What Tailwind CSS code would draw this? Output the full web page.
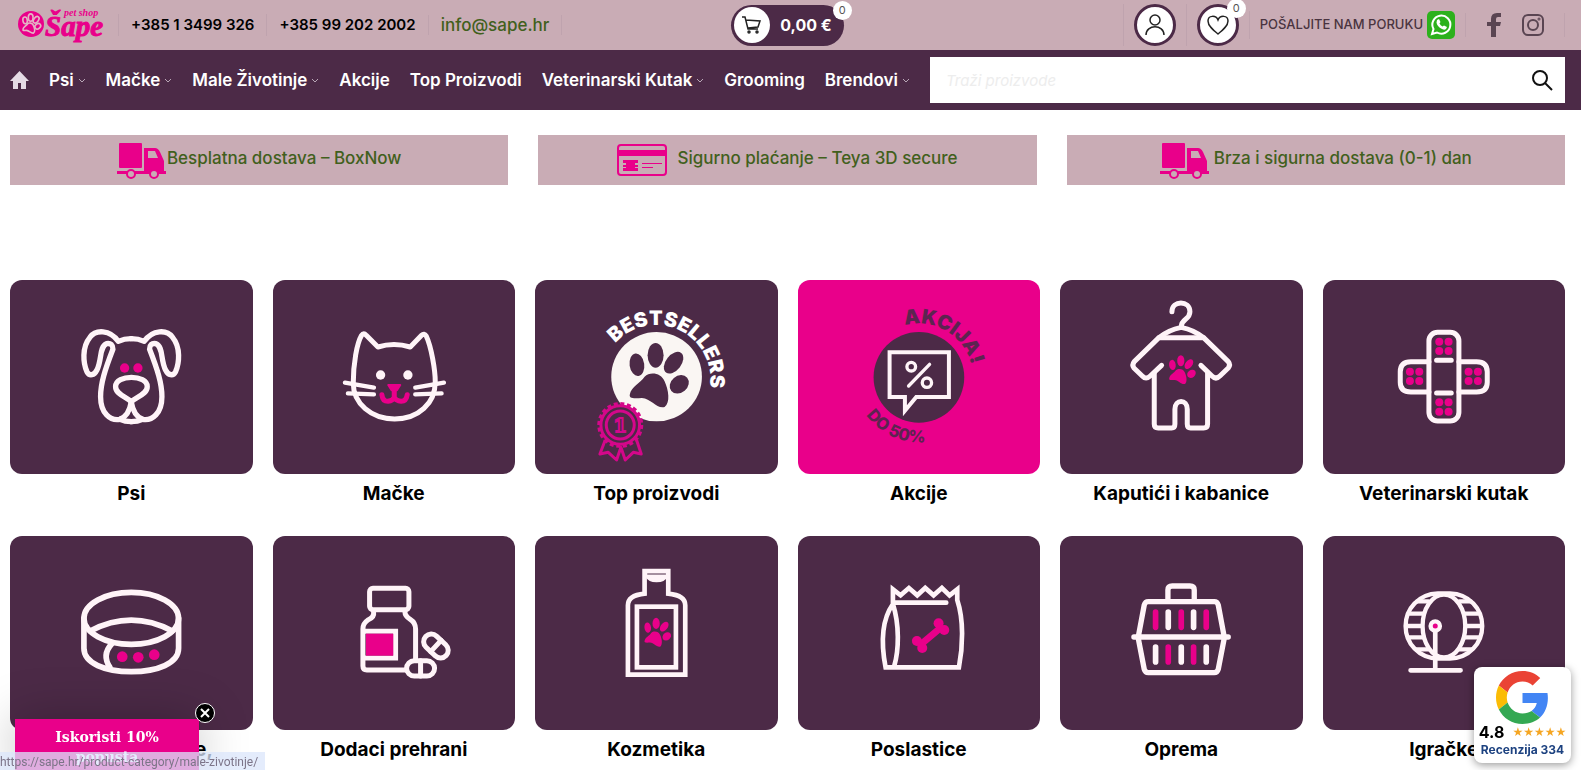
<!DOCTYPE html>
<html lang="hr">
<head>
  <meta charset="UTF-8" />
  <meta name="viewport" content="width=device-width, initial-scale=1" />
  <title>Pet shop Šape</title>
  <script src="https://cdn.jsdelivr.net/npm/@tailwindcss/browser@4"></script>
</head>
<body class="bg-white font-['Inter',sans-serif] text-black">

  <!-- shared shapes -->
  <svg class="absolute w-0 h-0" aria-hidden="true">
    <defs>
      <g id="paw">
        <ellipse cx="-59" cy="-36" rx="22" ry="34" transform="rotate(-8 -59 -36)" />
        <ellipse cx="-3" cy="-64" rx="24" ry="37" />
        <ellipse cx="51" cy="-42" rx="23" ry="37" transform="rotate(38 51 -42)" />
        <ellipse cx="68" cy="23" rx="31" ry="25" transform="rotate(-40 68 23)" />
        <path d="M-80 52C-76 30-48 18-36 0C-20-16 14-12 24 14C36 40 42 78 24 91C0 97-16 66-44 64C-70 66-84 66-80 52Z" />
      </g>
      <g id="truck">
        <rect x="2" y="1" width="23" height="25" rx="1" />
        <path fill-rule="evenodd" d="M27 6h11q3 0 5 4l4 9v11H27zM31 9v7h10l-3-7z" />
        <path d="M0 29h49v3H0z" />
        <circle cx="14" cy="32" r="4" fill="#c9acb5" stroke="#e9008a" stroke-width="2" />
        <circle cx="37" cy="32" r="4" fill="#c9acb5" stroke="#e9008a" stroke-width="2" />
      </g>
      <path id="chevron" d="M1 1l3 3 3-3" fill="none" stroke="#b9a8b7" stroke-width="1" />
    </defs>
  </svg>

  <header>
    <!-- top bar -->
    <div class="bg-[#c9acb5] h-[50px] pl-2.5 pr-4 flex items-center">
      <div class="flex-1 flex items-center font-semibold text-[15px]">
        <a href="#" aria-label="Pet shop Šape" class="pl-2 pr-3">
          <svg class="w-[88px] h-10" viewBox="0 0 88 40" fill="#e9008a">
            <circle cx="13" cy="19" r="13" />
            <g fill="none" stroke="#e3b5c5" stroke-width="16" transform="translate(13 19) scale(.1)"><use href="#paw" /></g>
            <text x="27" y="31" font-family="Liberation Serif, serif" font-style="italic" font-weight="700" font-size="29" stroke="#e9008a" stroke-width="1">Šape</text>
            <text x="46" y="11" font-family="Liberation Serif, serif" font-style="italic" font-weight="700" font-size="10">pet shop</text>
          </svg>
        </a>
        <a href="tel:+38513499326" class="border-l border-[#bfa3ae] px-3">+385 1 3499 326</a>
        <a href="tel:+385992022002" class="border-l border-[#bfa3ae] px-3">+385 99 202 2002</a>
        <a href="mailto:info@sape.hr" class="border-x border-[#bfa3ae] px-3 text-[17px] leading-5 font-medium text-[#41601c]">info@sape.hr</a>
      </div>

      <a href="#" class="relative h-[41px] pl-[3px] pr-3 rounded-full bg-[#4c2a47] text-white font-bold text-base flex items-center gap-2.5">
        <span class="size-9 rounded-full bg-white flex items-center justify-center">
          <svg class="size-5" viewBox="0 0 20 20" fill="none" stroke="#222" stroke-width="1.5">
            <path d="M0 2h3l3 12h10M4 5l14 1-2 6-10 1" />
            <circle cx="7" cy="17" r="1" /><circle cx="15" cy="17" r="1" />
          </svg>
        </span>
        0,00 €
        <span class="absolute -right-2 -top-1 size-[19px] rounded-full bg-white text-[#555] text-[11px] font-normal flex items-center justify-center">0</span>
      </a>

      <div class="flex-1 flex items-center justify-end">
        <div class="border-l border-[#bfa3ae] px-2.5">
          <button type="button" aria-label="Moj račun" class="size-[42px] rounded-full border-3 border-[#4c2a47] bg-white flex items-center justify-center">
            <svg class="size-6" viewBox="0 0 24 24" fill="none" stroke="#222" stroke-width="1.5">
              <circle cx="12" cy="7" r="5" /><path d="M3 22c0-11 18-11 18 0" />
            </svg>
          </button>
        </div>
        <div class="border-l border-[#bfa3ae] px-2.5">
          <button type="button" aria-label="Lista želja" class="relative size-[42px] rounded-full border-3 border-[#4c2a47] bg-white flex items-center justify-center">
            <svg class="size-6" viewBox="0 0 24 24" fill="none" stroke="#222" stroke-width="1.5">
              <path d="M12 21C7 17 2 13 2 8c0-6 8-6 10-1 2-5 10-5 10 1 0 5-5 9-10 13z" />
            </svg>
            <span class="absolute -right-2.5 -top-2 size-[19px] rounded-full bg-white text-[#555] text-[11px] flex items-center justify-center">0</span>
          </button>
        </div>
        <a href="#" class="border-l border-[#bfa3ae] px-2.5 flex items-center gap-1 text-[13px] font-medium text-[#4a3440]">
          POŠALJITE NAM PORUKU
          <svg class="size-7" viewBox="0 0 28 28">
            <rect width="28" height="28" rx="5" fill="#2cb11c" />
            <path d="M5 23l1.500-5A9 9 0 1 1 10 21.500z" fill="none" stroke="#fff" stroke-width="2" />
            <path d="M10 9l2-1 1.500 3-1 1.500q1 2 3 3l1.500-1 3 1.500-1 2q-2 1.500-5-.5-4-2.500-4.500-6z" fill="#fff" />
          </svg>
        </a>
        <div class="border-x border-[#bfa3ae] px-5 flex items-center gap-5">
          <a href="#" aria-label="Facebook">
            <svg class="w-4 h-6" viewBox="0 0 16 24" fill="#5a4552"><path d="M5 24V13H1V9h4V6q0-6 6-6h4v4h-3q-2 0-2 2v3h5l-1 4h-4v11z" /></svg>
          </a>
          <a href="#" aria-label="Instagram">
            <svg class="size-[22px]" viewBox="0 0 22 22" fill="none" stroke="#5a4552" stroke-width="2">
              <rect x="1" y="1" width="20" height="20" rx="5" /><circle cx="11" cy="11" r="5" /><circle cx="17" cy="5" r=".5" />
            </svg>
          </a>
        </div>
      </div>
    </div>

    <!-- main menu -->
    <div class="bg-[#4c2a47] h-[60px] pl-2.5 pr-4 flex items-center gap-5">
      <nav class="flex-1 flex items-center justify-between text-white font-semibold text-[17px] leading-6 whitespace-nowrap">
        <a href="#" aria-label="Početna">
          <svg class="size-[19px]" viewBox="0 0 19 19" fill="#e5dbe5"><path d="M9.500 0L19 10h-3v8h-5v-6H8v6H3v-8H0z" /></svg>
        </a>
        <a href="#" class="flex items-center gap-1">Psi<svg class="w-2 h-[5px]"><use href="#chevron" /></svg></a>
        <a href="#" class="flex items-center gap-1">Mačke<svg class="w-2 h-[5px]"><use href="#chevron" /></svg></a>
        <a href="#" class="flex items-center gap-1">Male Životinje<svg class="w-2 h-[5px]"><use href="#chevron" /></svg></a>
        <a href="#">Akcije</a>
        <a href="#">Top Proizvodi</a>
        <a href="#" class="flex items-center gap-1">Veterinarski Kutak<svg class="w-2 h-[5px]"><use href="#chevron" /></svg></a>
        <a href="#">Grooming</a>
        <a href="#" class="flex items-center gap-1">Brendovi<svg class="w-2 h-[5px]"><use href="#chevron" /></svg></a>
      </nav>
      <form class="w-[635px] h-[46px] bg-white flex items-center pl-4 pr-3">
        <input type="search" aria-label="Traži proizvode" placeholder="Traži proizvode" class="flex-1 h-full text-[15px] italic outline-none placeholder:text-[#ededed]" />
        <button type="button" aria-label="Traži">
          <svg class="size-[22px]" viewBox="0 0 22 22" fill="none" stroke="#111" stroke-width="2"><circle cx="9" cy="9" r="7" /><path d="M14 14l7 7" /></svg>
        </button>
      </form>
    </div>
  </header>

  <main class="pl-2.5 pr-4 pt-[25px]">
    <!-- benefits -->
    <section class="grid grid-cols-3 gap-[30px] font-medium text-[17px] leading-6 text-[#41601c]">
      <div class="bg-[#c9acb5] h-[50px] flex items-center justify-center">
        <svg class="w-[50px] h-[37px]" viewBox="0 0 50 37" fill="#e9008a"><use href="#truck" /></svg>
        <span class="pb-1">Besplatna dostava – BoxNow</span>
      </div>
      <div class="bg-[#c9acb5] h-[50px] flex items-center justify-center gap-2.5">
        <svg class="w-[50px] h-8" viewBox="0 0 50 32" fill="#e9008a">
          <rect x="1" y="1" width="48" height="30" rx="3" fill="none" stroke="#e9008a" stroke-width="2" />
          <path d="M1 6h48v6H1zM6 16h15v3H6zM9 19h9v2H9zM6 21h15v2H6zM9 23h9v1H9zM6 24h15v3H6zM25 19h20v1H25zM25 23h11v1H25z" />
        </svg>
        <span class="pb-1">Sigurno plaćanje – Teya 3D secure</span>
      </div>
      <div class="bg-[#c9acb5] h-[50px] flex items-center justify-center gap-1">
        <svg class="w-[50px] h-[37px]" viewBox="0 0 50 37" fill="#e9008a"><use href="#truck" /></svg>
        <span class="pb-1">Brza i sigurna dostava (0-1) dan</span>
      </div>
    </section>

    <!-- categories -->
    <section class="mt-[95px] grid grid-cols-6 gap-x-5 gap-y-7 text-center text-[19px] leading-7 font-bold">
      <a href="#">
        <svg class="w-full aspect-5/4 rounded-xl bg-[#4c2a47]" viewBox="30 30 718 582" fill="none" stroke="#fff4f8" stroke-width="16" stroke-linecap="round" stroke-linejoin="round">
          <g id="dog-half">
            <path d="M389 206Q368 206 350 214C325 178 282 178 265 202C240 232 245 280 256 305C264 320 278 316 286 300C302 268 292 232 315 221Q334 218 334 238C310 300 297 340 297 380C297 430 326 453 355 448C376 440 385 420 389 396" />
            <path d="M355 448Q370 455 389 455" />
          </g>
          <use href="#dog-half" transform="matrix(-1 0 0 1 778 0)" />
          <path d="M342 350C342 313 437 313 437 350C437 372 405 380 389 395C373 380 342 372 342 350Z" />
          <g fill="#e9008a" stroke="none"><circle cx="369" cy="294" r="14" /><circle cx="409" cy="294" r="14" /></g>
        </svg>
        <div class="mt-1.5">Psi</div>
      </a>
      <a href="#">
        <svg class="w-full aspect-5/4 rounded-xl bg-[#4c2a47]" viewBox="808 30 718 582" fill="none" stroke="#fff4f8" stroke-width="15" stroke-linecap="round" stroke-linejoin="round">
          <path d="M1044 340C1044 280 1055 220 1069 196Q1075 187 1083 196L1118 231Q1166 216 1215 231L1249 196Q1257 188 1263 198C1278 230 1290 300 1290 335C1290 400 1240 447 1168 447C1098 447 1044 400 1044 340Z" />
          <path stroke-width="13" d="M1019 338L1106 353M1028 370L1106 373M1316 338L1230 353M1309 370L1230 373" />
          <g fill="#fff4f8" stroke="none"><circle cx="1126" cy="315" r="14" /><circle cx="1208" cy="315" r="14" /></g>
          <g stroke="#e9008a" fill="#e9008a" stroke-width="6"><path d="M1149 345h36l-10 16h-16z" /><path fill="none" stroke-width="15" d="M1167 360V384M1130 374Q1132 394 1148 394Q1163 392 1167 382Q1172 392 1188 394Q1203 394 1206 374" /></g>
        </svg>
        <div class="mt-1.5">Mačke</div>
      </a>
      <a href="#">
        <svg class="w-full aspect-5/4 rounded-xl bg-[#4c2a47]" viewBox="44 30 718 582">
          <ellipse cx="404" cy="320" rx="136" ry="134" fill="#faf6f3" />
          <g fill="#4c2a47" transform="translate(404 320)"><use href="#paw" /></g>
          <path id="best-arc" d="M280 220A163 163 0 0 1 543 410" fill="none" />
          <text font-family="Inter, sans-serif" font-weight="900" font-size="60" fill="#fff"><textPath href="#best-arc">BESTSELLERS</textPath></text>
          <g fill="#4c2a47" stroke="#d4078a" stroke-width="9" stroke-linejoin="round">
            <path d="M250 510L234 552L259 547L284 570L297 532L310 570L334 547L358 552L344 510" />
            <circle cx="295" cy="465" r="58" />
            <circle cx="295" cy="465" r="64" fill="none" stroke-width="10" stroke-dasharray="12 8" />
            <circle cx="295" cy="465" r="42" />
          </g>
          <text x="295" y="486" text-anchor="middle" font-family="DejaVu Serif, serif" font-weight="700" font-size="58" fill="#4c2a47" stroke="#d4078a" stroke-width="6">1</text>
        </svg>
        <div class="mt-1.5">Top proizvodi</div>
      </a>
      <a href="#">
        <svg class="w-full aspect-5/4 rounded-xl bg-[#e9008a]" viewBox="822 30 718 582" fill="none" stroke="#fff4f8" stroke-width="12">
          <circle cx="1180" cy="322" r="136" fill="#4c2a47" stroke="none" />
          <path d="M1092 247H1270V381H1172L1138 422V381H1092Z" />
          <g stroke-width="10" stroke-linecap="round"><circle cx="1157" cy="290" r="13" /><circle cx="1204" cy="338" r="14" /><path d="M1212 283L1149 348" /></g>
          <path id="sale-arc" d="M1138 166A162 162 0 0 1 1340 346" stroke="none" />
          <path id="off-arc" d="M1022 435A195 195 0 0 0 1256 502" stroke="none" />
          <g font-family="Inter, sans-serif" font-weight="900" fill="#5c2450" stroke="none">
            <text font-size="60"><textPath href="#sale-arc">AKCIJA!</textPath></text>
            <text font-size="50" font-weight="800"><textPath href="#off-arc">DO 50%</textPath></text>
          </g>
        </svg>
        <div class="mt-1.5">Akcije</div>
      </a>
      <a href="#">
        <svg class="w-full aspect-5/4 rounded-xl bg-[#4c2a47]" viewBox="30 30 718 582" fill="none" stroke="#fff4f8" stroke-width="15" stroke-linecap="round" stroke-linejoin="round">
          <path d="M361 125C361 90 415 90 415 125C415 150 389 145 389 170M322 203Q350 180 389 172Q428 180 456 203" />
          <path d="M330 286L296 318Q283 330 272 318L247 294Q240 285 248 275L322 203H456L530 275Q538 285 530 294L505 318Q493 330 481 318L448 286" />
          <path d="M308 310V462Q308 474 320 474H360Q370 474 370 462V418C370 387 407 387 407 418V462Q407 474 417 474H456Q468 474 468 462V310" />
          <g fill="#e9008a" stroke="none" transform="translate(389 301) scale(.45)"><use href="#paw" /></g>
        </svg>
        <div class="mt-1.5">Kaputići i kabanice</div>
      </a>
      <a href="#">
        <svg class="w-full aspect-5/4 rounded-xl bg-[#4c2a47]" viewBox="806 30 718 582" fill="none" stroke="#fff4f8" stroke-width="15" stroke-linecap="round">
          <rect x="1119" y="187" width="90" height="266" rx="26" />
          <path d="M1119 275H1065Q1033 275 1033 305V337Q1033 366 1065 366H1119M1209 275H1262Q1294 275 1294 305V337Q1294 366 1262 366H1209" />
          <path d="M1142 271H1186M1142 369H1186" />
          <g id="dots" fill="#e9008a" stroke="none"><circle cx="1150" cy="215" r="12" /><circle cx="1178" cy="215" r="12" /><circle cx="1150" cy="243" r="12" /><circle cx="1178" cy="243" r="12" /></g>
          <use href="#dots" y="182" /><use href="#dots" x="-88" y="90" /><use href="#dots" x="88" y="90" />
        </svg>
        <div class="mt-1.5">Veterinarski kutak</div>
      </a>

      <a href="#">
        <svg class="w-full aspect-5/4 rounded-xl bg-[#4c2a47]" viewBox="30 18 718 582" fill="none" stroke="#fff4f8" stroke-width="17" stroke-linecap="round">
          <ellipse cx="389" cy="265" rx="142" ry="78" />
          <path d="M247 265V355C247 400 310 425 389 425C468 425 531 400 531 355V265M266 303Q389 238 512 303M330 342Q300 375 325 412" />
          <g fill="#e9008a" stroke="none"><circle cx="362" cy="380" r="16" /><circle cx="410" cy="382" r="16" /><circle cx="458" cy="374" r="16" /></g>
        </svg>
        <div class="mt-1.5">Za male životinje,</div>
      </a>
      <a href="#">
        <svg class="w-full aspect-5/4 rounded-xl bg-[#4c2a47]" viewBox="808 18 718 582" fill="none" stroke="#fff4f8" stroke-width="15" stroke-linecap="round">
          <rect x="1093" y="175" width="118" height="64" rx="10" />
          <path d="M1105 245Q1108 262 1088 270Q1073 280 1073 297V408Q1073 420 1085 420H1200M1199 245Q1199 258 1215 268Q1231 278 1231 297V388M1080 304H1171V384H1080" />
          <rect x="1082" y="311" width="82" height="66" fill="#e9008a" stroke="none" />
          <g id="pill"><rect x="1204" y="392" width="84" height="46" rx="23" /><path d="M1246 392V438" /></g>
          <use href="#pill" transform="translate(1292 348) rotate(43) translate(-1246 -415)" />
        </svg>
        <div class="mt-1.5">Dodaci prehrani</div>
      </a>
      <a href="#">
        <svg class="w-full aspect-5/4 rounded-xl bg-[#4c2a47]" viewBox="44 18 718 582" fill="none" stroke="#fff4f8" stroke-width="14">
          <path d="M368 123H439V191Q490 196 490 226V434H318V226Q318 196 368 191Z" />
          <rect x="345" y="230" width="117" height="182" />
          <path d="M370 125H438V137Q430 157 404 157Q378 157 370 137Z" fill="#fff4f8" stroke="none" />
          <path d="M376 132H432" stroke="#4c2a47" stroke-width="3" />
          <g fill="#e9008a" stroke="none" transform="translate(404 309) scale(.45)"><use href="#paw" /></g>
        </svg>
        <div class="mt-1.5">Kozmetika</div>
      </a>
      <a href="#">
        <svg class="w-full aspect-5/4 rounded-xl bg-[#4c2a47]" viewBox="822 18 718 582" fill="none" stroke="#fff4f8" stroke-width="14" stroke-linecap="round">
          <path d="M1102 218V178L1125 196L1150 174L1175 196L1199 174L1224 196L1249 174L1272 196L1295 178V210C1315 270 1312 350 1300 412H1080C1068 350 1065 275 1102 222C1122 285 1120 360 1106 408M1108 218H1262" />
          <g fill="#e9008a" stroke="#e9008a"><path stroke-width="20" d="M1185 344L1243 295" /><g stroke="none"><circle cx="1174" cy="333" r="15" /><circle cx="1190" cy="354" r="15" /><circle cx="1239" cy="280" r="15" /><circle cx="1256" cy="300" r="15" /></g></g>
        </svg>
        <div class="mt-1.5">Poslastice</div>
      </a>
      <a href="#">
        <svg class="w-full aspect-5/4 rounded-xl bg-[#4c2a47]" viewBox="30 18 718 582" fill="none" stroke="#fff4f8" stroke-width="16" stroke-linecap="round">
          <path d="M349 210V180Q349 168 362 168H415Q428 168 428 180V210M260 321L278 225Q281 215 290 215H488Q497 215 500 225L518 321M260 325L278 418Q281 428 290 428H488Q497 428 500 418L518 325M247 321H530" />
          <path stroke-width="17" d="M350 246V292M426 246V292M312 351V396M389 351V396M464 351V396" />
          <path stroke-width="17" stroke="#e9008a" d="M312 246V292M389 246V292M464 246V292M350 351V396M426 351V396" />
        </svg>
        <div class="mt-1.5">Oprema</div>
      </a>
      <a href="#">
        <svg class="w-full aspect-5/4 rounded-xl bg-[#4c2a47]" viewBox="806 18 718 582" fill="none" stroke="#fff4f8" stroke-width="13" stroke-linecap="round">
          <path d="M1146 190H1182C1240 192 1279 236 1279 288C1279 340 1240 384 1182 386H1146C1088 384 1049 340 1049 288C1049 236 1088 192 1146 190Z" />
          <ellipse cx="1164" cy="288" rx="64" ry="94" />
          <path d="M1084 214H1118M1062 251H1104M1052 288H1098M1060 322H1104M1082 358H1118M1244 214H1210M1266 251H1224M1276 288H1230M1268 322H1224M1246 358H1210" />
          <path stroke-width="14" d="M1138 304V418M1064 421H1214" />
          <circle cx="1138" cy="288" r="14" fill="#e9008a" />
        </svg>
        <div class="mt-1.5">Igračke</div>
      </a>
    </section>
  </main>

  <!-- newsletter teaser -->
  <aside class="fixed left-[15px] bottom-0 w-[184px] h-[51px] bg-[#e9008a] shadow-[0_0_50px_rgba(0,0,0,0.25)]">
    <p class="pt-2 text-center text-white font-bold text-sm leading-5 font-['DejaVu_Serif',serif]">Iskoristi 10%<br />popusta</p>
    <button type="button" aria-label="Zatvori" class="absolute -right-4 -top-4 size-5 rounded-full bg-black border border-white flex items-center justify-center">
      <svg class="size-2.5" viewBox="0 0 10 10" stroke="#fff" stroke-width="2"><path d="M1 1l8 8M9 1l-8 8" /></svg>
    </button>
  </aside>

  <!-- link status -->
  <div class="fixed left-0 bottom-0 w-[265px] h-[18px] bg-[#dbe6fb]/75 text-[#7c7488] text-xs leading-5 whitespace-nowrap font-['Roboto',sans-serif]">https://sape.hr/product-category/male-zivotinje/</div>

  <!-- Google rating -->
  <a href="#" class="fixed right-2.5 bottom-[7px] w-[97px] h-24 rounded-lg bg-white shadow-[0_2px_8px_rgba(0,0,0,0.4)] flex flex-col items-center pt-1">
    <svg class="size-[53px]" viewBox="0 0 48 48">
      <path fill="#ea4335" d="M24 9.500c3.540 0 6.710 1.220 9.210 3.600l6.850-6.850C35.900 2.380 30.470 0 24 0 14.620 0 6.510 5.380 2.560 13.220l7.980 6.190C12.430 13.720 17.740 9.500 24 9.500z" />
      <path fill="#4285f4" d="M46.980 24.550c0-1.570-.15-3.090-.38-4.550H24v9.020h12.940c-.58 2.960-2.260 5.480-4.780 7.180l7.730 6c4.510-4.180 7.090-10.360 7.090-17.650z" />
      <path fill="#fbbc05" d="M10.530 28.590c-.48-1.450-.76-2.990-.76-4.590s.27-3.140.76-4.590l-7.980-6.190C.92 16.460 0 20.120 0 24s.92 7.540 2.560 10.780z" />
      <path fill="#34a853" d="M24 48c6.480 0 11.930-2.130 15.890-5.810l-7.730-6c-2.150 1.450-4.920 2.300-8.160 2.300-6.260 0-11.570-4.220-13.470-9.910l-7.980 6.190C6.510 42.620 14.620 48 24 48z" />
    </svg>
    <span class="flex items-center gap-2 text-base leading-4 font-bold">4.8 <span class="text-[#f5a623] text-xs leading-4 font-normal font-['DejaVu_Sans',sans-serif]">★★★★★</span></span>
    <span class="text-xs leading-5 font-bold text-[#1d4280]">Recenzija 334</span>
  </a>

</body>
</html>
